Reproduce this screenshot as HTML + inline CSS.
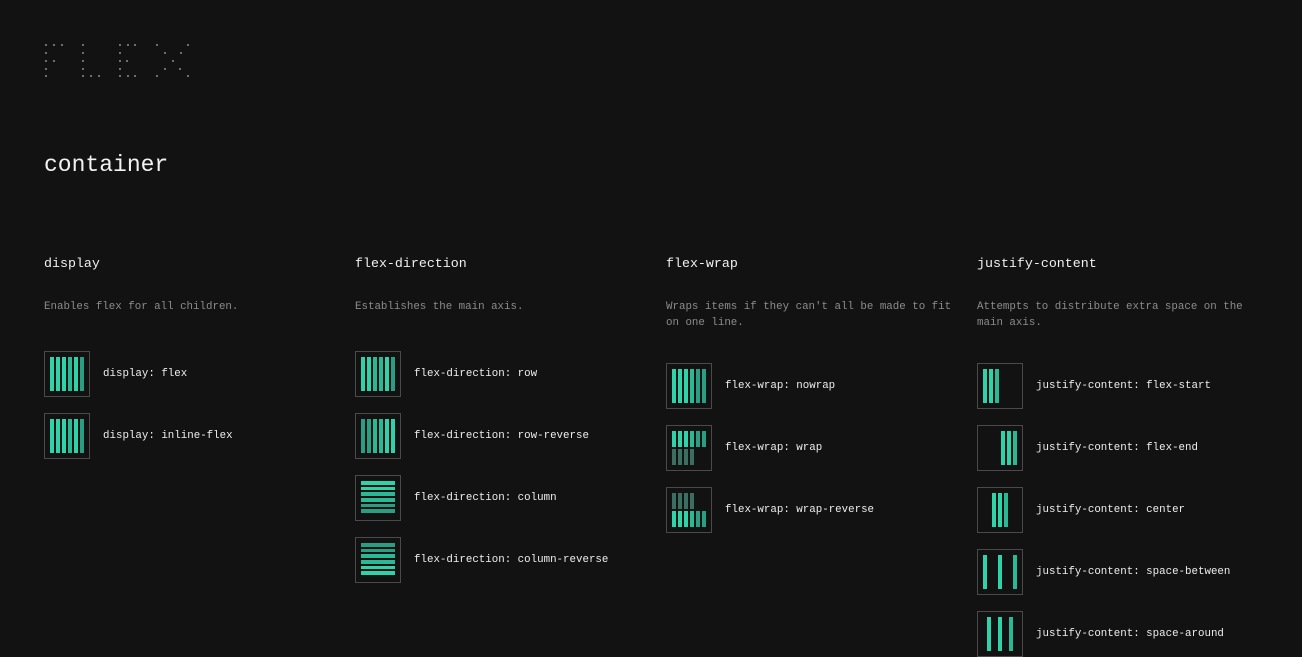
<!DOCTYPE html><html><head><style>
body{margin:0;background:#121212;width:1302px;height:644px;overflow:hidden;font-family:"Liberation Mono",monospace;color:#eee;position:relative}
.dot{position:absolute;width:2px;height:2px;background:#6e6e6e}
h1{position:absolute;left:44px;top:148px;margin:0;font-weight:normal;font-size:23px;line-height:34px;color:#f2f2f2}
.col{position:absolute;top:254px;width:292px}
h2{margin:0;font-weight:normal;font-size:13.3px;line-height:20px;color:#f0f0f0}
.d{margin:25px 0 0;font-size:10.8px;line-height:16px;color:#8c8c8c;height:32px}
.d.one{height:20px}
.it{display:flex;align-items:center;height:46px;margin-top:16px}
.box{width:34px;height:34px;padding:5px;border:1px solid #4a4a4a;display:flex;flex-shrink:0}
.lb{margin-left:13px;font-size:10.8px;color:#eee}
.b{background:#2fd3aa}.k{background:#2a9e82}.t{background:#2bb895}.w{background:#3a6e60}
.r>i{display:block;width:4px;height:34px;margin-right:2px}.r>i:last-child{margin-right:0}
.c{flex-direction:column}.c>i{display:block;height:4px;width:34px;margin-bottom:2px}
.s{flex-wrap:wrap;align-content:space-between}.s>i{display:block;width:4px;height:16px;margin-right:2px}
.s>i:nth-child(6){margin-right:0}
.j>i{display:block;width:4px;height:34px}
.sp{height:16px}
</style></head><body>
<div id="logo"></div>
<h1>container</h1>

<div class="col" style="left:44px"><h2>display</h2><div class="d one">Enables flex for all children.</div>
<div class="sp"></div>
<div class="it"><div class="box r"><i class="b"></i><i class="b"></i><i class="b"></i><i class="t"></i><i class="b"></i><i class="k"></i></div><span class="lb">display: flex</span></div>
<div class="it"><div class="box r"><i class="b"></i><i class="b"></i><i class="b"></i><i class="t"></i><i class="b"></i><i class="k"></i></div><span class="lb">display: inline-flex</span></div>
</div>

<div class="col" style="left:355px"><h2>flex-direction</h2><div class="d one">Establishes the main axis.</div>
<div class="sp"></div>
<div class="it"><div class="box r"><i class="b"></i><i class="b"></i><i class="t"></i><i class="t"></i><i class="b"></i><i class="k"></i></div><span class="lb">flex-direction: row</span></div>
<div class="it"><div class="box r"><i class="k"></i><i class="k"></i><i class="t"></i><i class="t"></i><i class="b"></i><i class="b"></i></div><span class="lb">flex-direction: row-reverse</span></div>
<div class="it"><div class="box c"><i class="b"></i><i class="b"></i><i class="t"></i><i class="t"></i><i class="k"></i><i class="k"></i></div><span class="lb">flex-direction: column</span></div>
<div class="it"><div class="box c"><i class="k"></i><i class="k"></i><i class="t"></i><i class="t"></i><i class="b"></i><i class="b"></i></div><span class="lb">flex-direction: column-reverse</span></div>
</div>

<div class="col" style="left:666px"><h2>flex-wrap</h2><div class="d">Wraps items if they can't all be made to fit on one line.</div>
<div class="sp"></div>
<div class="it"><div class="box r"><i class="b"></i><i class="b"></i><i class="b"></i><i class="t"></i><i class="k"></i><i class="k"></i></div><span class="lb">flex-wrap: nowrap</span></div>
<div class="it"><div class="box s"><i class="b"></i><i class="b"></i><i class="b"></i><i class="t"></i><i class="k"></i><i class="k"></i><i class="w"></i><i class="w"></i><i class="w"></i><i class="w"></i></div><span class="lb">flex-wrap: wrap</span></div>
<div class="it"><div class="box s" style="flex-wrap:wrap-reverse"><i class="b"></i><i class="b"></i><i class="b"></i><i class="t"></i><i class="k"></i><i class="k"></i><i class="w"></i><i class="w"></i><i class="w"></i><i class="w"></i></div><span class="lb">flex-wrap: wrap-reverse</span></div>
</div>

<div class="col" style="left:977px"><h2>justify-content</h2><div class="d">Attempts to distribute extra space on the main axis.</div>
<div class="sp"></div>
<div class="it"><div class="box j" style="justify-content:flex-start;gap:2px"><i class="b"></i><i class="b"></i><i class="t"></i></div><span class="lb">justify-content: flex-start</span></div>
<div class="it"><div class="box j" style="justify-content:flex-end;gap:2px"><i class="b"></i><i class="b"></i><i class="t"></i></div><span class="lb">justify-content: flex-end</span></div>
<div class="it"><div class="box j" style="justify-content:center;gap:2px"><i class="b"></i><i class="b"></i><i class="t"></i></div><span class="lb">justify-content: center</span></div>
<div class="it"><div class="box j" style="justify-content:space-between"><i class="b"></i><i class="b"></i><i class="t"></i></div><span class="lb">justify-content: space-between</span></div>
<div class="it"><div class="box j" style="justify-content:space-around"><i class="b"></i><i class="b"></i><i class="t"></i></div><span class="lb">justify-content: space-around</span></div>
</div>

<script>
var p=[[45,44],[53,44],[61,44],[45,52],[45,60],[53,60],[45,68],[45,75],
[82,44],[82,52],[82,60],[82,68],[82,75],[90,75],[98,75],
[119,44],[127,44],[134,44],[119,52],[119,60],[126,60],[119,68],[119,75],[127,75],[134,75],
[156,44],[187,44],[164,52],[180,52],[172,60],[164,68],[179,68],[156,75],[187,75]];
var h='';p.forEach(function(a){h+='<div class="dot" style="left:'+a[0]+'px;top:'+a[1]+'px"></div>'});
document.getElementById('logo').innerHTML=h;
</script>
</body></html>
